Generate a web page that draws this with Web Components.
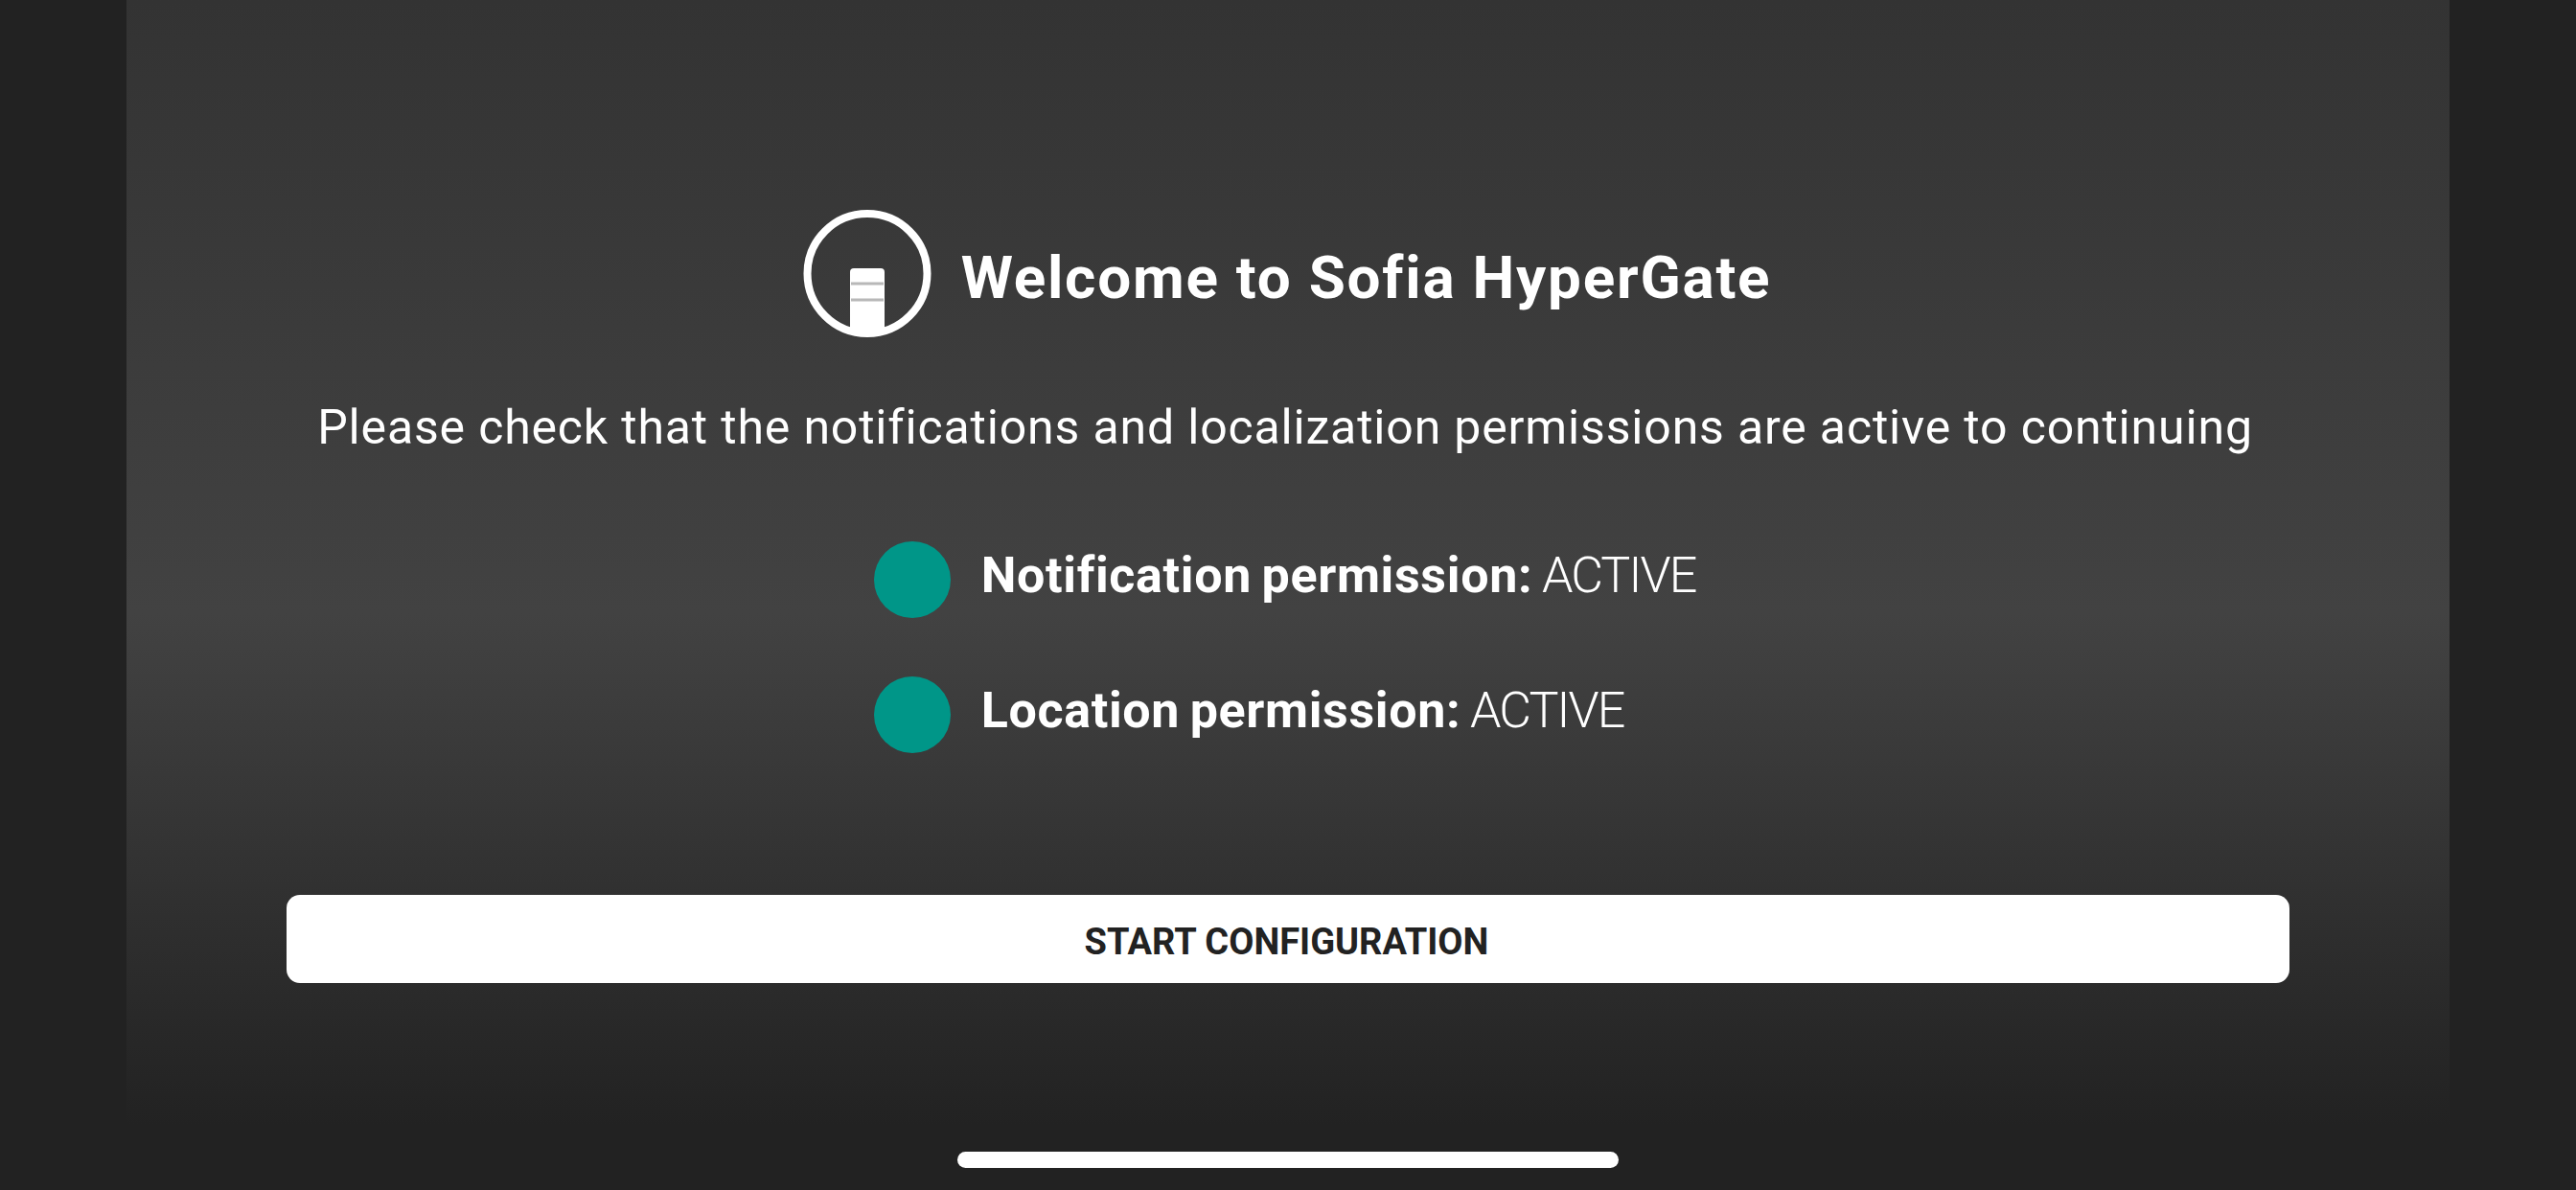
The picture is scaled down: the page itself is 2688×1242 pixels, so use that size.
<!DOCTYPE html>
<html>
<head>
<meta charset="utf-8">
<title>Sofia HyperGate</title>
<style>
  html, body { margin: 0; height: 100%; background: #222; }
  body { font-family: Roboto, "Liberation Sans", sans-serif; color: #fff; overflow: hidden; }
</style>
</head>
<body>
<app-screen>
  <welcome-header>Welcome to Sofia HyperGate</welcome-header>
  <p slot="intro">Please check that the notifications and localization permissions are active to continuing</p>
  <permission-row label="Notification permission:" state="ACTIVE"></permission-row>
  <permission-row label="Location permission:" state="ACTIVE"></permission-row>
  <start-button slot="action">START CONFIGURATION</start-button>
</app-screen>

<script>
class AppScreen extends HTMLElement {
  constructor() {
    super();
    this.attachShadow({ mode: 'open' });
    this.shadowRoot.innerHTML = `
      <style>
        :host {
          display: flex;
          justify-content: center;
          position: relative;
          height: 1242px;
          background: #222;
        }
        #panel {
          width: 2424px;
          box-sizing: border-box;
          padding: 218px 167px 0;
          display: flex;
          flex-direction: column;
          align-items: center;
          background: linear-gradient(to bottom, #333 0, #424242 640px, #222 1175px);
        }
        #intro { margin-top: 63px; padding-right: 6px; }
        ::slotted(p) {
          margin: 0;
          font-size: 50px;
          font-weight: 400;
          line-height: 60px;
          letter-spacing: 0.83px;
          white-space: nowrap;
        }
        #rows {
          margin-top: 89px;
          padding-right: 7px;
          display: flex;
          flex-direction: column;
          gap: 61px;
        }
        #action { margin-top: 148px; align-self: stretch; }
        #home {
          position: absolute;
          left: 999px;
          bottom: 23px;
          width: 690px;
          height: 17px;
          border-radius: 9px;
          background: #fff;
        }
      </style>
      <div id="panel">
        <slot></slot>
        <div id="intro"><slot name="intro"></slot></div>
        <div id="rows"><slot name="rows"></slot></div>
        <div id="action"><slot name="action"></slot></div>
      </div>
      <div id="home"></div>
    `;
  }

  connectedCallback() {
    // the rows go in their own stack below the intro line
    this.querySelectorAll('permission-row').forEach(row => row.slot = 'rows');
  }
}

class WelcomeHeader extends HTMLElement {
  constructor() {
    super();
    this.attachShadow({ mode: 'open' });
    this.shadowRoot.innerHTML = `
      <style>
        :host {
          display: flex;
          align-items: center;
          gap: 30px;
          padding-right: 2px;
        }
        svg { width: 135px; height: 135px; flex: none; display: block; }
        h1 {
          margin: 0;
          padding-top: 9px;
          font-size: 62px;
          font-weight: 700;
          line-height: 72px;
          letter-spacing: 1.76px;
          white-space: nowrap;
        }
      </style>
      <svg viewBox="0 0 135 135" aria-hidden="true">
        <circle cx="67" cy="67.5" r="62.5" fill="none" stroke="#fff" stroke-width="8"/>
        <path d="M49 66a4 4 0 0 1 4-4h28a4 4 0 0 1 4 4v62H49z" fill="#fff"/>
        <path d="M50 78h34M50 95h34" stroke="#b8b8b8" stroke-width="3" fill="none"/>
      </svg>
      <h1><slot></slot></h1>
    `;
  }
}

class PermissionRow extends HTMLElement {
  constructor() {
    super();
    this.attachShadow({ mode: 'open' });
    this.shadowRoot.innerHTML = `
      <style>
        :host {
          display: flex;
          align-items: center;
          gap: 32px;
          font-size: 52px;
          white-space: nowrap;
        }
        #dot {
          width: 80px;
          height: 80px;
          flex: none;
          border-radius: 50%;
          background: #009688;
        }
        #text { padding-bottom: 8px; line-height: 60px; font-weight: 300; word-spacing: -3px; }
        b { font-weight: 700; letter-spacing: 0.65px; }
        span { letter-spacing: -1.9px; }
      </style>
      <div id="dot"></div>
      <div id="text"><b id="label"></b> <span id="state"></span></div>
    `;
  }

  connectedCallback() {
    this.shadowRoot.getElementById('label').textContent = this.getAttribute('label');
    this.shadowRoot.getElementById('state').textContent = this.getAttribute('state');
  }
}

class StartButton extends HTMLElement {
  constructor() {
    super();
    this.attachShadow({ mode: 'open' });
    this.shadowRoot.innerHTML = `
      <style>
        :host { display: block; }
        button {
          display: block;
          width: 100%;
          height: 92px;
          padding: 5px 3px 0 0;
          border: 0;
          border-radius: 14px;
          background: #fff;
          color: #222;
          font-family: inherit;
          font-size: 38px;
          font-weight: 700;
        }
      </style>
      <button><slot></slot></button>
    `;
  }
}

customElements.define('app-screen', AppScreen);
customElements.define('welcome-header', WelcomeHeader);
customElements.define('permission-row', PermissionRow);
customElements.define('start-button', StartButton);
</script>
</body>
</html>
